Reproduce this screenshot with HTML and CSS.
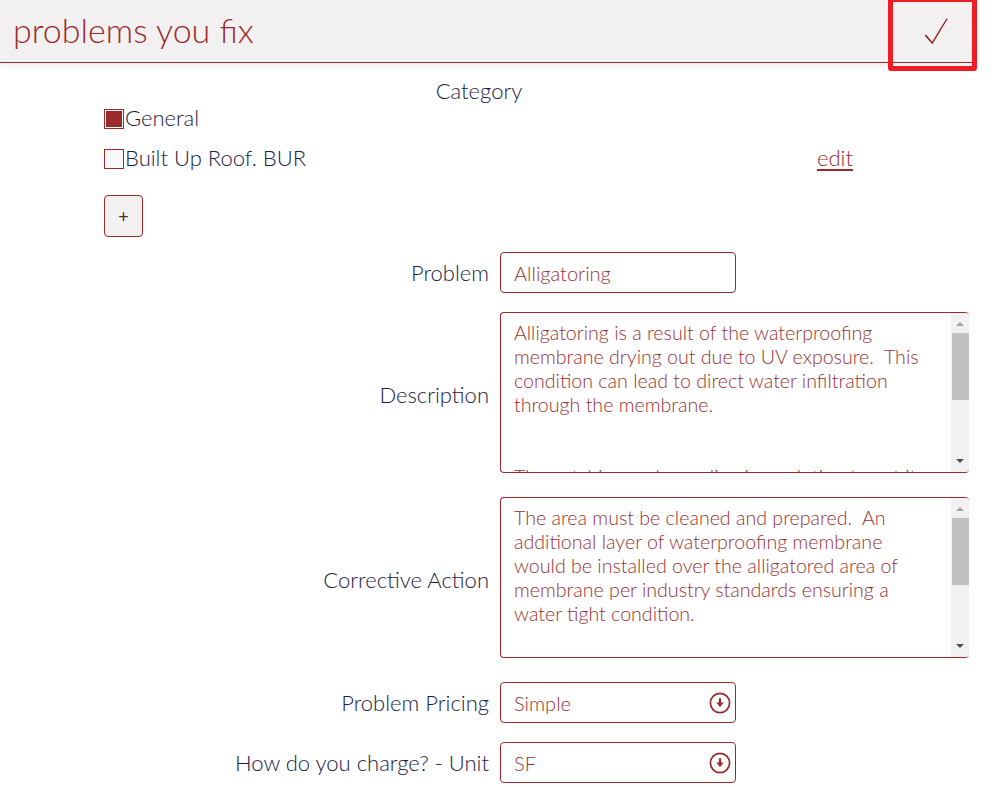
FILE: index.html
```html
<!DOCTYPE html>
<html lang="en">
<head>
<meta charset="utf-8">
<title>problems you fix</title>
<link rel="stylesheet" href="styles.css">
</head>
<body>
<div class="page">
  <header class="topbar">
    <h1 class="title">problems you fix</h1>
    <button class="done" type="button" aria-label="Done">
      <svg width="24" height="28" viewBox="0 0 24 28"><path d="M0.6 18.4 L2 17.4 L8.2 24.8 L22.6 1.2 L23.6 1.9 L8.4 27.2 Z" fill="#8f2626"/></svg>
    </button>
  </header>
  <div class="highlight"></div>

  <section class="category">
    <div class="cat-title">Category</div>
    <div class="cat-row"><span class="box checked"></span><span class="cat-name">General</span></div>
    <div class="cat-row"><span class="box"></span><span class="cat-name">Built Up Roof. BUR</span><a class="edit" href="#">edit</a></div>
    <button class="add" type="button">+</button>
  </section>

  <div class="form">
    <div class="lbl">Problem</div>
    <div class="input">Alligatoring</div>

    <div class="lbl">Description</div>
    <div class="area"><div class="area-text">Alligatoring is a result of the waterproofing
membrane drying out due to UV exposure.  This
condition can lead to direct water infiltration
through the membrane.


The patching and resealing is a solution to get it protected.</div><div class="sb"><span class="up"></span><span class="thumb"></span><span class="down"></span></div></div>

    <div class="lbl">Corrective Action</div>
    <div class="area"><div class="area-text">The area must be cleaned and prepared.  An
additional layer of waterproofing membrane
would be installed over the alligatored area of
membrane per industry standards ensuring a
water tight condition.</div><div class="sb"><span class="up"></span><span class="thumb"></span><span class="down"></span></div></div>

    <div class="lbl">Problem Pricing</div>
    <div class="input select"><span>Simple</span>
      <svg width="22" height="22" viewBox="0 0 22 22"><circle cx="11" cy="11" r="9.6" fill="none" stroke="#962a2a" stroke-width="1.7"/><path d="M9.9 6.2 H12.1 V10.6 H14.6 L11 15.2 L7.4 10.6 H9.9 Z" fill="#962a2a"/></svg>
    </div>

    <div class="lbl">How do you charge? - Unit</div>
    <div class="input select"><span>SF</span>
      <svg width="22" height="22" viewBox="0 0 22 22"><circle cx="11" cy="11" r="9.6" fill="none" stroke="#962a2a" stroke-width="1.7"/><path d="M9.9 6.2 H12.1 V10.6 H14.6 L11 15.2 L7.4 10.6 H9.9 Z" fill="#962a2a"/></svg>
    </div>
  </div>
</div>
</body>
</html>
```
FILE: styles.css
```css
html, body {
  margin: 0;
  padding: 0;
  background: #ffffff;
}

body {
  font-family: "Lato Light", "Lato", "Open Sans", sans-serif;
  font-weight: 300;
  color: #1a2143;
}

.page {
  position: relative;
  width: 998px;
  height: 787px;
  overflow: hidden;
}

.topbar {
  box-sizing: border-box;
  width: 974px;
  height: 63px;
  background: #f2f0f1;
  border-bottom: 1px solid #9b2a2a;
  box-shadow: 0 3px 6px rgba(0, 0, 0, 0.07);
  display: flex;
  align-items: center;
  justify-content: space-between;
  padding: 0 26px 0 13px;
}

.title {
  margin: 0 0 3px;
  font-size: 34px;
  font-weight: 300;
  line-height: 34px;
  color: #9a2c2c;
}

.done {
  display: block;
  width: 24px;
  height: 28px;
  padding: 0;
  border: 0;
  background: none;
}

.done svg {
  display: block;
}

.highlight {
  position: absolute;
  left: 888px;
  top: -3px;
  width: 89px;
  height: 74px;
  box-sizing: border-box;
  border: 5px solid #ee1c25;
  border-radius: 3px;
}

.category {
  width: 750px;
  margin: 15px 0 0 104px;
}

.cat-title {
  text-align: center;
  font-size: 22px;
  line-height: 26px;
}

.cat-row {
  display: flex;
  align-items: flex-start;
  height: 24px;
  line-height: 24px;
  font-size: 22px;
  margin-top: 2px;
}

.cat-row + .cat-row {
  margin-top: 16px;
}

.box {
  box-sizing: border-box;
  width: 20px;
  height: 20px;
  margin-top: 3px;
  border: 1px solid #9a2a2a;
  background: #f8f8fb;
  flex: none;
}

.box.checked {
  background: #992b2b;
  box-shadow: inset 0 0 0 1px #ffffff;
}

.cat-name {
  margin-left: 1px;
}

.edit {
  margin-left: auto;
  color: #9a2a2a;
  text-decoration: underline;
  text-underline-offset: 3px;
  margin-right: 1px;
}

.add {
  display: block;
  box-sizing: border-box;
  width: 39px;
  height: 42px;
  margin-top: 25px;
  padding: 0;
  border: 1px solid #9a2a2a;
  border-radius: 4px;
  background: #f2f0f1;
  font-family: "Lato", sans-serif;
  font-size: 18px;
  font-weight: 400;
  color: #5a2a2a;
}

.form {
  display: grid;
  grid-template-columns: 489px auto;
  column-gap: 11px;
  row-gap: 19px;
  align-items: center;
  margin-top: 15px;
}

.lbl {
  text-align: right;
  font-size: 22px;
  line-height: 26px;
  white-space: nowrap;
}

.input {
  box-sizing: border-box;
  width: 236px;
  height: 41px;
  border: 1px solid #9a2a2a;
  border-radius: 4px;
  padding: 0 13px;
  display: flex;
  align-items: center;
  font-size: 20px;
  color: #9a3232;
}

.select {
  justify-content: space-between;
  padding-right: 4px;
}

.select svg {
  display: block;
}

.area {
  position: relative;
  box-sizing: border-box;
  width: 469px;
  height: 161px;
  margin-bottom: 5px;
  border: 1px solid #9a2a2a;
  border-right: 0;
  border-radius: 4px;
  overflow: hidden;
}

.area-text {
  padding: 8px 0 0 13px;
  font-size: 19.6px;
  line-height: 24px;
  white-space: pre;
  color: #9a3232;
}

.sb {
  position: absolute;
  top: 0;
  right: 0;
  bottom: 0;
  width: 18px;
  background: #f1f1f1;
}

.thumb {
  position: absolute;
  left: 1px;
  right: 0;
  top: 20px;
  height: 67px;
  background: #c1c1c1;
}

.up,
.down {
  position: absolute;
  left: 5px;
  width: 0;
  height: 0;
  border-left: 4px solid transparent;
  border-right: 4px solid transparent;
}

.up {
  top: 9px;
  border-bottom: 4px solid #a3a3a3;
}

.down {
  bottom: 9px;
  border-top: 4px solid #505050;
}
```
